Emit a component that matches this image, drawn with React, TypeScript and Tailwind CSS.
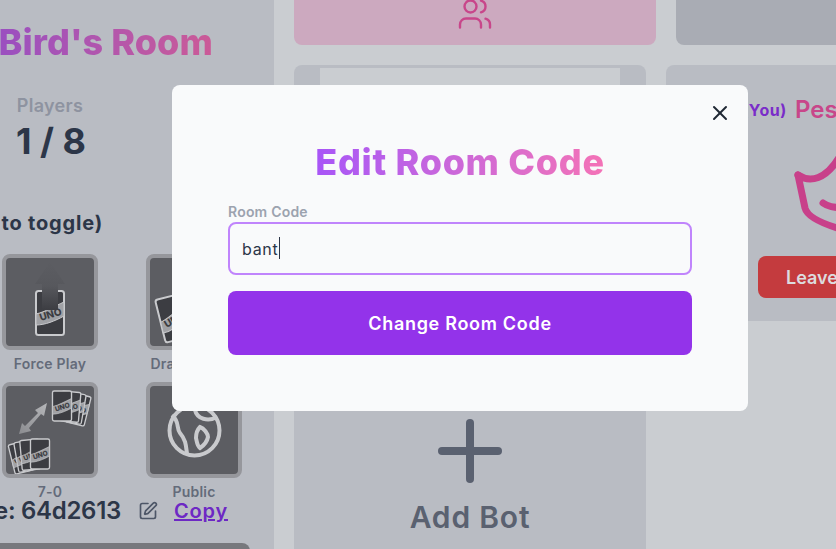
import { X, Plus, Users, SquarePen } from "lucide-react";

const font = { fontFamily: "Inter, 'Open Sans', sans-serif" };

function Card({ x, y, r = 0, textR = -17 }: { x: number; y: number; r?: number; textR?: number }) {
  return (
    <g transform={`translate(${x} ${y}) rotate(${r})`}>
      <rect x="-14" y="-22" width="28" height="44" rx="2.5" fill="#3c3d42" stroke="#c9cacd" strokeWidth="2" />
      <path d="M-14 1 C-5 -1 5 -7 14 -11 L14 3 C5 8 -5 12 -14 12Z" fill="#a0a1a5" stroke="#c9cacd" strokeWidth="1" />
      <text x="0" y="5" textAnchor="middle" fontSize="10" fontWeight="800" fill="#3c3d42" transform={`rotate(${textR})`} fontFamily="Inter, sans-serif">
        UNO
      </text>
    </g>
  );
}

function Tile({ label, children, labelClass = "" }: { label: string; children?: React.ReactNode; labelClass?: string }) {
  return (
    <div className="flex w-[96px] flex-col items-center">
      <div className="h-[96px] w-[96px] overflow-hidden rounded-lg border-4 border-[#96979c] bg-[#5c5d62]">
        <svg viewBox="0 0 88 88" width="88" height="88">
          {children}
        </svg>
      </div>
      <span className={`mt-[5px] text-[14px] leading-[18px] font-semibold tracking-[0.2px] whitespace-nowrap text-[#646b7a] ${labelClass}`}>{label}</span>
    </div>
  );
}

export default function App() {
  return (
    <div className="relative flex h-[549px] w-[836px] overflow-hidden bg-[#cacdd1]" style={font}>
      {/* left panel */}
      <aside className="flex h-full w-[274px] shrink-0 flex-col overflow-hidden bg-[#b9bcc3]">
        <div className="mt-[19px] flex w-[213px] justify-end">
          <h1 className="bg-gradient-to-r from-[#9a4fc0] to-[#cb5a97] bg-clip-text text-[36px] leading-[46px] font-extrabold tracking-[0.1px] whitespace-nowrap text-transparent">
            Bird's Room
          </h1>
        </div>
        <div className="mt-[29px] ml-[16px] w-[68px] text-center">
          <p className="text-[18px] leading-[24px] font-semibold tracking-[0.3px] text-[#8e93a0]">Players</p>
          <p className="text-[36px] leading-[46px] font-bold whitespace-nowrap text-[#2c3648]">1 / 8</p>
        </div>
        <div className="mt-[45px] flex w-[103px] justify-end text-[20px] leading-[28px] font-bold tracking-[0.8px] whitespace-nowrap text-[#2c3648]">
          to toggle)
        </div>
        <div className="mt-[17px] ml-[2px] flex gap-[48px]">
          <Tile label="Force Play">
            <defs>
              <linearGradient id="up" x1="0" y1="0" x2="0" y2="1">
                <stop offset="0" stopColor="#5c5d62" />
                <stop offset="0.5" stopColor="#57585d" />
                <stop offset="1" stopColor="#3c3d42" />
              </linearGradient>
            </defs>
            <Card x={44} y={55} />
            <path d="M44 4 L59 26 L52 26 L52 52 L36 52 L36 26 L29 26Z" fill="url(#up)" />
          </Tile>
          <Tile label="Draw to Play">
            <Card x={24} y={60} r={-14} />
          </Tile>
        </div>
        <div className="mt-[9px] ml-[2px] flex gap-[48px]">
          <Tile label="7-0" labelClass="-mt-[1px]">
            <defs>
              <linearGradient id="swap" x1="0" y1="1" x2="1" y2="0">
                <stop offset="0" stopColor="#8b8c90" />
                <stop offset="1" stopColor="#b5b6b9" />
              </linearGradient>
            </defs>
            <g transform="translate(56 20) scale(0.68)">
              <Card x={24} y={5} r={14} />
              <Card x={18} y={3} r={10} />
              <Card x={12} y={1} r={5} />
              <Card x={0} y={0} r={0} />
            </g>
            <g transform="translate(34 68) scale(0.68)">
              <Card x={-28} y={5} r={-14} />
              <Card x={-21} y={3} r={-10} />
              <Card x={-14} y={1} r={-5} />
              <Card x={0} y={0} r={0} />
            </g>
            <path d="M13 48 L16 37 L19 40 L32 27 L29 24 L41 17 L38 30 L35 28 L23 42 L25 45Z" fill="url(#swap)" />
          </Tile>
          <Tile label="Public">
            <circle cx="44.5" cy="44.5" r="25" fill="none" stroke="#c9cacd" strokeWidth="4" />
            <path d="M22 29 C30 36 26 42 30 47 C36 54 36 60 37 68" fill="none" stroke="#c9cacd" strokeWidth="4" />
            <path d="M45 24 C47 33 58 36 67 31" fill="none" stroke="#c9cacd" strokeWidth="4" />
            <path d="M50 41 C54 42 58 48 58 51 C57 56 53 60 50 62 C47 60 47 56 46 52 C46 48 47 44 50 41Z" fill="none" stroke="#c9cacd" strokeWidth="4" />
          </Tile>
        </div>
        <div className="-mt-[6px] flex items-center">
          <span className="flex w-[121px] justify-end text-[24px] leading-[32px] font-semibold tracking-[-0.3px] whitespace-nowrap text-[#2c3648]">e: 64d2613</span>
          <SquarePen className="ml-[17px] h-[20px] w-[20px] text-[#4d5667]" strokeWidth={2} />
          <a className="ml-[16px] text-[20px] leading-[28px] font-semibold tracking-[0.8px] text-[#6d28c4] underline decoration-2">Copy</a>
        </div>
        <div className="mt-[16px] -ml-[10px] h-[30px] w-[260px] shrink-0 rounded-lg bg-[#77787d]" />
      </aside>

      {/* board */}
      <main className="min-w-0 flex-1 pl-[20px]">
        <div className="-mt-[20px] flex gap-[20px]">
          <div className="flex h-[65px] w-[362px] shrink-0 items-end justify-center rounded-lg bg-[#cca9bf] pb-[13px]">
            <Users className="h-[36px] w-[36px] text-[#c8468a]" strokeWidth={1.6} />
          </div>
          <div className="h-[65px] w-[300px] shrink-0 rounded-lg bg-[#a9acb4]" />
        </div>
        <div className="mt-[20px] flex gap-[20px]">
          <div className="flex w-[352px] shrink-0 flex-col gap-[20px]">
            <div className="h-[256px] rounded-lg bg-[#b9bcc3] px-[26px] pt-[3px]">
              <div className="h-full bg-[#cacdd1]" />
            </div>
            <div className="flex h-[300px] flex-col items-center rounded-lg bg-[#b9bcc3] pt-[62px]">
              <Plus className="h-[96px] w-[96px] text-[#5a6170]" strokeWidth={2} />
              <span className="text-[30px] leading-[36px] font-semibold tracking-[0.8px] text-[#5a6170]">Add Bot</span>
            </div>
          </div>
          <div className="h-[256px] w-[300px] shrink-0 rounded-lg bg-[#b9bcc3]">
            <div className="mt-[31px] flex items-center whitespace-nowrap">
              <span className="w-[121px] text-right text-[16px] leading-[24px] font-bold tracking-[0.6px] text-[#7a2cc9]">(You)</span>
              <span className="ml-[8px] text-[24px] leading-[28px] font-semibold text-[#c8468a]">Pesky</span>
            </div>
            <svg className="mt-[26px] ml-[124px]" width="120" height="100" viewBox="0 0 120 100" fill="none" stroke="#c8408a" strokeWidth="7" strokeLinecap="round" strokeLinejoin="round">
              <path d="M8 25 C20 33 36 30 50 6" />
              <path d="M8 25 L15 58 C17 66 30 75 70 84" />
              <path d="M33 53 C37 56 42 58 60 58" />
            </svg>
            <div className="mt-[6px] ml-[92px] flex h-[42px] w-[140px] items-center rounded-lg bg-[#c43b3e] pl-[28px] text-[18px] font-semibold text-[#dcdcdf]">
              Leave
            </div>
          </div>
        </div>
      </main>

      {/* dialog */}
      <div className="absolute top-[85px] left-[172px] flex h-[326px] w-[576px] flex-col rounded-lg bg-[#f9fafb] px-[56px] pt-[54px]">
        <button className="absolute top-[16px] right-[16px] text-[#1f2733]">
          <X className="h-[24px] w-[24px]" strokeWidth={2} />
        </button>
        <h2 className="self-center bg-gradient-to-r from-[#a855f7] to-[#f472b6] bg-clip-text text-[36px] leading-[46px] font-extrabold tracking-[0.7px] text-transparent">
          Edit Room Code
        </h2>
        <label className="mt-[19px] text-[14px] leading-[16px] font-semibold tracking-[0.2px] text-[#9ca3af]">Room Code</label>
        <div className="relative mt-[2px]">
          <input
            defaultValue="bant"
            className="h-[53px] w-full rounded-lg border-2 border-[#c084fc] bg-[#f9fafb] px-[12px] text-[16px] tracking-[0.7px] text-[#2c3648] outline-none"
          />
          <span className="absolute top-[15px] left-[51px] h-[22px] w-px bg-[#2c3648]" />
        </div>
        <button className="mt-[16px] h-[64px] w-full rounded-lg bg-[#9333ea] text-[18px] font-semibold tracking-[0.7px] text-white">
          Change Room Code
        </button>
      </div>
    </div>
  );
}
